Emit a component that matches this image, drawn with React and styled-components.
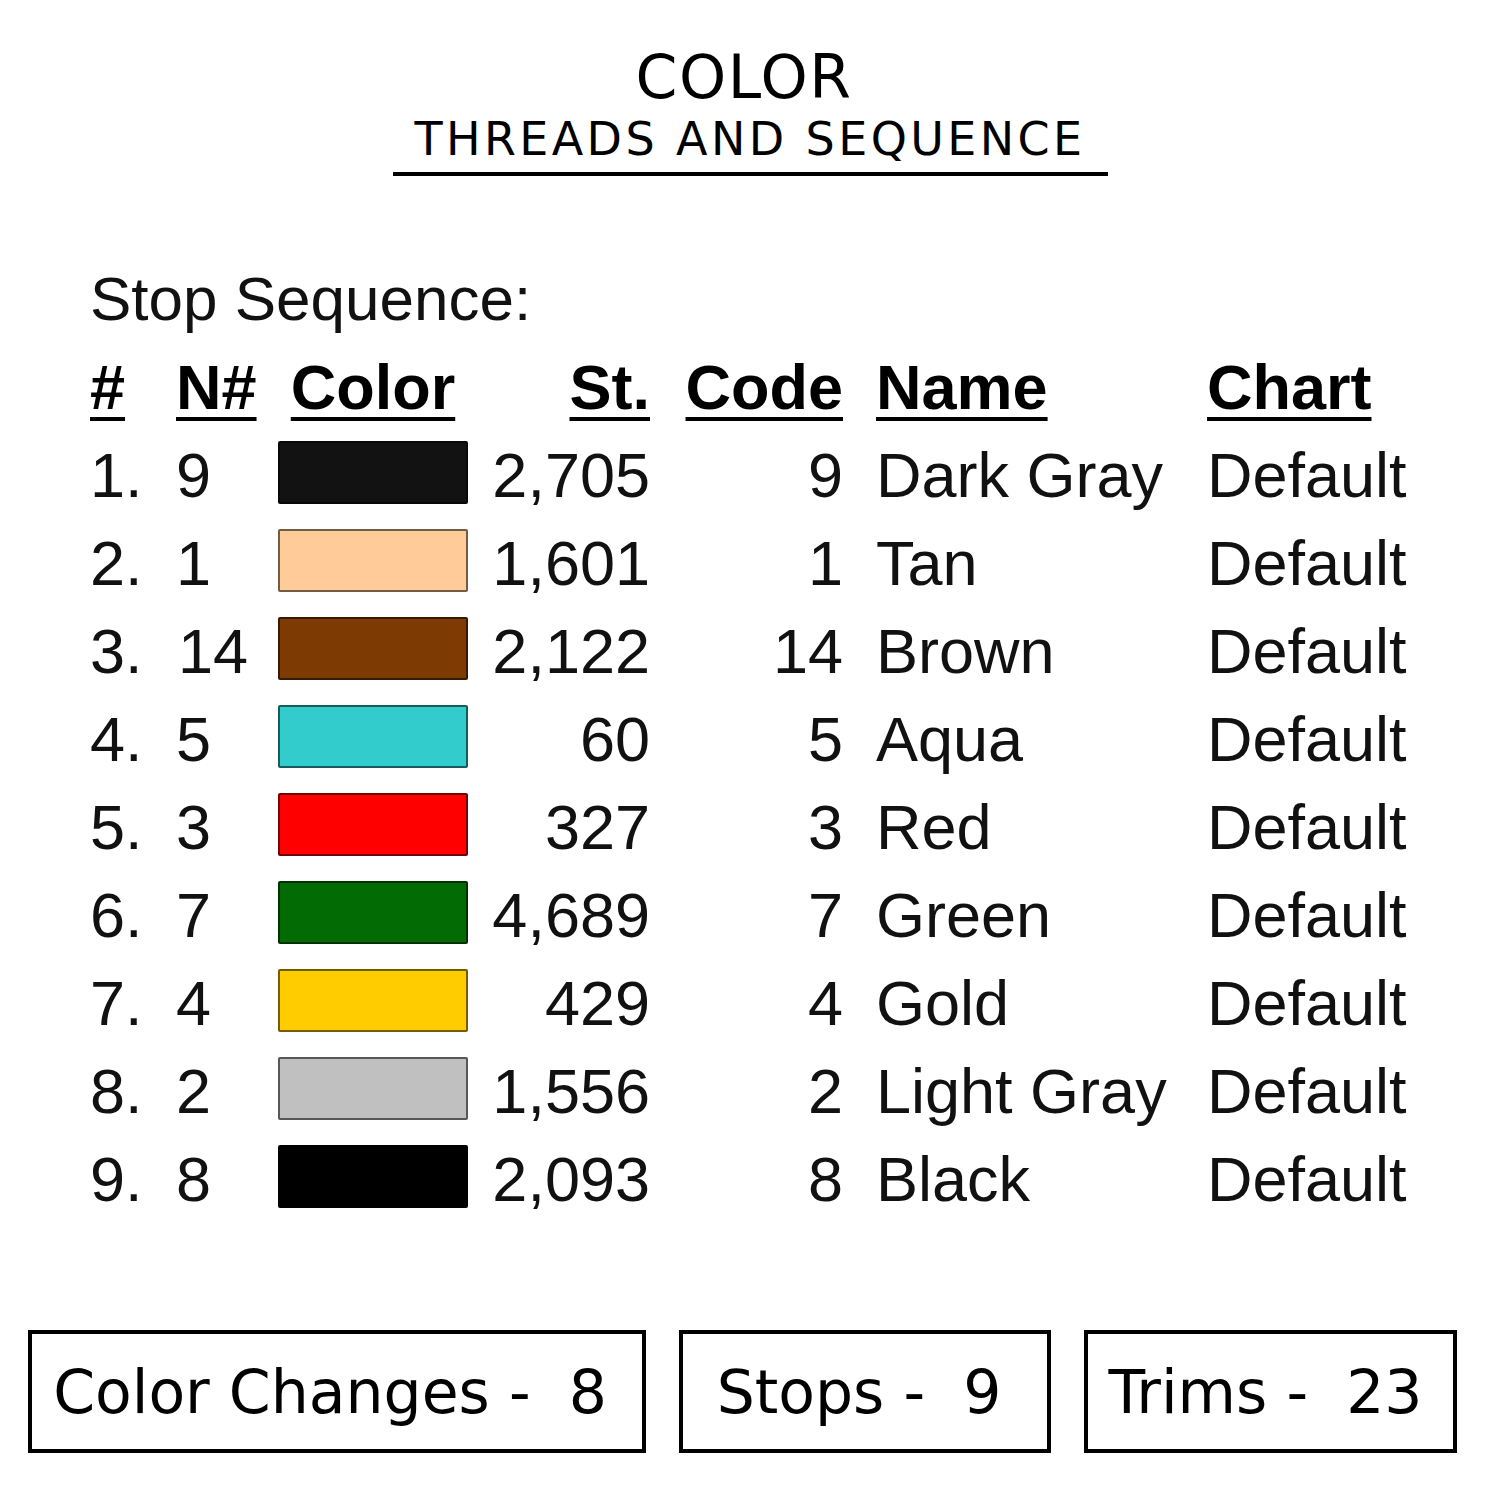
import { Fragment } from "react";
import styled, { createGlobalStyle } from "styled-components";

const GlobalStyle = createGlobalStyle`
  html, body {
    margin: 0;
    padding: 0;
    background: #ffffff;
  }
`;

const Page = styled.div`
  width: 1500px;
  height: 1500px;
  box-sizing: border-box;
  background: #ffffff;
  color: #000000;
  display: flex;
  flex-direction: column;
`;

const Header = styled.header`
  display: flex;
  flex-direction: column;
  align-items: center;
  padding-top: 43px;
`;

const Title = styled.h1`
  margin: 0;
  padding-right: 12px;
  font-family: "DejaVu Sans", sans-serif;
  font-weight: 400;
  font-size: 60px;
  line-height: 68px;
  letter-spacing: 1.5px;
`;

const Subtitle = styled.h2`
  margin: 0;
  width: 715px;
  text-align: center;
  font-family: "DejaVu Sans", sans-serif;
  font-weight: 400;
  font-size: 46px;
  line-height: 56px;
  letter-spacing: 3.4px;
  padding-bottom: 5px;
  border-bottom: 4px solid #000;
`;

const Section = styled.section`
  padding: 87px 0 0 90px;
  font-family: "Liberation Sans", Arial, sans-serif;
`;

const SectionTitle = styled.p`
  margin: 0 0 8px 0;
  font-size: 62px;
  line-height: 72px;
  color: #111;
`;

const Table = styled.div`
  display: grid;
  grid-template-columns: 86px 102px 190px 182px 193px 364px auto;
  grid-auto-rows: 88px;
  align-items: center;
  font-size: 63px;
  line-height: 88px;
  color: #111;
`;

const HeadCell = styled.div`
  font-weight: 700;
  text-decoration: underline;
  text-decoration-thickness: 4px;
  text-underline-offset: 8px;
  text-align: ${p => p.$align || "left"};
  padding-left: ${p => p.$pad || 0}px;
  color: #000;
`;

const Cell = styled.div`
  text-align: ${p => p.$align || "left"};
  padding-left: ${p => p.$pad || 0}px;
  white-space: nowrap;
`;

const Swatch = styled.div`
  width: 190px;
  height: 63px;
  box-sizing: border-box;
  border: 2px solid rgba(0, 0, 0, 0.55);
  border-radius: 2px;
  margin-top: -6px;
  background: ${p => p.$color};
`;

const Footer = styled.footer`
  margin-top: auto;
  padding: 0 0 47px 28px;
  display: flex;
  gap: 33px;
`;

const StatBox = styled.div`
  width: ${p => p.$width}px;
  height: 123px;
  box-sizing: border-box;
  border: 4px solid #000;
  display: flex;
  align-items: center;
  justify-content: center;
  padding-right: ${p => p.$shift || 0}px;
  font-family: "DejaVu Sans", sans-serif;
  font-size: 60px;
  white-space: pre;
`;

const threads = [
  { n: 9, color: "#121212", st: "2,705", name: "Dark Gray" },
  { n: 1, color: "#FFCC99", st: "1,601", name: "Tan" },
  { n: 14, color: "#7D3A02", st: "2,122", name: "Brown" },
  { n: 5, color: "#33CCCC", st: "60", name: "Aqua" },
  { n: 3, color: "#FF0000", st: "327", name: "Red" },
  { n: 7, color: "#036B03", st: "4,689", name: "Green" },
  { n: 4, color: "#FFCC00", st: "429", name: "Gold" },
  { n: 2, color: "#C0C0C0", st: "1,556", name: "Light Gray" },
  { n: 8, color: "#000000", st: "2,093", name: "Black" },
];

const stats = [
  { label: "Color Changes -  8", width: 618, shift: 14 },
  { label: "Stops -  9", width: 372, shift: 12 },
  { label: "Trims -  23", width: 373, shift: 10 },
];

export default function App() {
  return (
    <Page>
      <GlobalStyle />
      <Header>
        <Title>COLOR</Title>
        <Subtitle>THREADS AND SEQUENCE</Subtitle>
      </Header>

      <Section>
        <SectionTitle>Stop Sequence:</SectionTitle>
        <Table>
          <HeadCell>#</HeadCell>
          <HeadCell>N#</HeadCell>
          <HeadCell $align="center">Color</HeadCell>
          <HeadCell $align="right">St.</HeadCell>
          <HeadCell $align="right">Code</HeadCell>
          <HeadCell $pad={33}>Name</HeadCell>
          <HeadCell>Chart</HeadCell>

          {threads.map((t, i) => (
            <Fragment key={i}>
              <Cell>{i + 1}.</Cell>
              <Cell $pad={t.n > 9 ? 2 : 0}>{t.n}</Cell>
              <Swatch $color={t.color} />
              <Cell $align="right">{t.st}</Cell>
              <Cell $align="right">{t.n}</Cell>
              <Cell $pad={33}>{t.name}</Cell>
              <Cell>Default</Cell>
            </Fragment>
          ))}
        </Table>
      </Section>

      <Footer>
        {stats.map(s => (
          <StatBox key={s.label} $width={s.width} $shift={s.shift}>
            {s.label}
          </StatBox>
        ))}
      </Footer>
    </Page>
  );
}
